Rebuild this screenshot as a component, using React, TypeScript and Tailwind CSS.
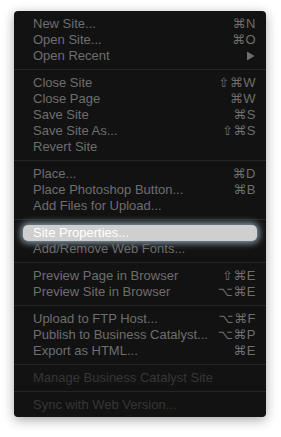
import React from "react";

type Item = { label: string; sc?: string; arrow?: boolean; disabled?: boolean; hl?: boolean };
const groups: Item[][] = [
  [
    { label: "New Site...", sc: "⌘N" },
    { label: "Open Site...", sc: "⌘O" },
    { label: "Open Recent", arrow: true },
  ],
  [
    { label: "Close Site", sc: "⇧⌘W" },
    { label: "Close Page", sc: "⌘W" },
    { label: "Save Site", sc: "⌘S" },
    { label: "Save Site As...", sc: "⇧⌘S" },
    { label: "Revert Site" },
  ],
  [
    { label: "Place...", sc: "⌘D" },
    { label: "Place Photoshop Button...", sc: "⌘B" },
    { label: "Add Files for Upload..." },
  ],
  [
    { label: "Site Properties...", hl: true },
    { label: "Add/Remove Web Fonts..." },
  ],
  [
    { label: "Preview Page in Browser", sc: "⇧⌘E" },
    { label: "Preview Site in Browser", sc: "⌥⌘E" },
  ],
  [
    { label: "Upload to FTP Host...", sc: "⌥⌘F" },
    { label: "Publish to Business Catalyst...", sc: "⌥⌘P" },
    { label: "Export as HTML...", sc: "⌘E" },
  ],
  [{ label: "Manage Business Catalyst Site", disabled: true }],
  [{ label: "Sync with Web Version...", disabled: true }],
];

function Row({ it }: { it: Item }) {
  if (it.hl) {
    return (
      <div className="h-[16px] px-[9px]">
        <div className="h-[16px] rounded-[5px] bg-[#cfcfcf] text-white flex items-center pl-[10px] shadow-[0_0_7px_2px_rgba(190,215,235,0.75)]">
          {it.label}
        </div>
      </div>
    );
  }
  return (
    <div
      className={
        "h-[16px] flex items-center justify-between pl-[19px] pr-[10px] " +
        (it.disabled ? "text-[#363636]" : "text-[#6e6e6e]")
      }
    >
      <span>{it.label}</span>
      {it.sc && (
        <span
          className="tracking-[0.5px]"
          style={{ fontFamily: '"Liberation Sans", "DejaVu Sans", sans-serif' }}
        >
          {it.sc}
        </span>
      )}
      {it.arrow && (
        <svg width="9" height="10" viewBox="0 0 9 10" className="mr-[1px]">
          <path d="M1 0.5 L8.5 5 L1 9.5 Z" fill="#6e6e6e" />
        </svg>
      )}
    </div>
  );
}

export default function App() {
  return (
    <div className="w-[281px] h-[437px] bg-white pt-[11px] pl-[14px]">
      <div
        className="w-[252px] h-[406px] bg-[#121212] rounded-[4px] pt-[5px] shadow-[0_3px_12px_rgba(0,0,0,0.35)] text-[13px] leading-[16px]"
        style={{ fontFamily: '"Liberation Sans", "DejaVu Sans", Arial, sans-serif' }}
      >
        {groups.map((g, gi) => (
          <div key={gi}>
            {gi > 0 && <div className="h-px bg-[#262626] my-[5px]" />}
            {g.map((it, i) => (
              <Row key={i} it={it} />
            ))}
          </div>
        ))}
      </div>
    </div>
  );
}
